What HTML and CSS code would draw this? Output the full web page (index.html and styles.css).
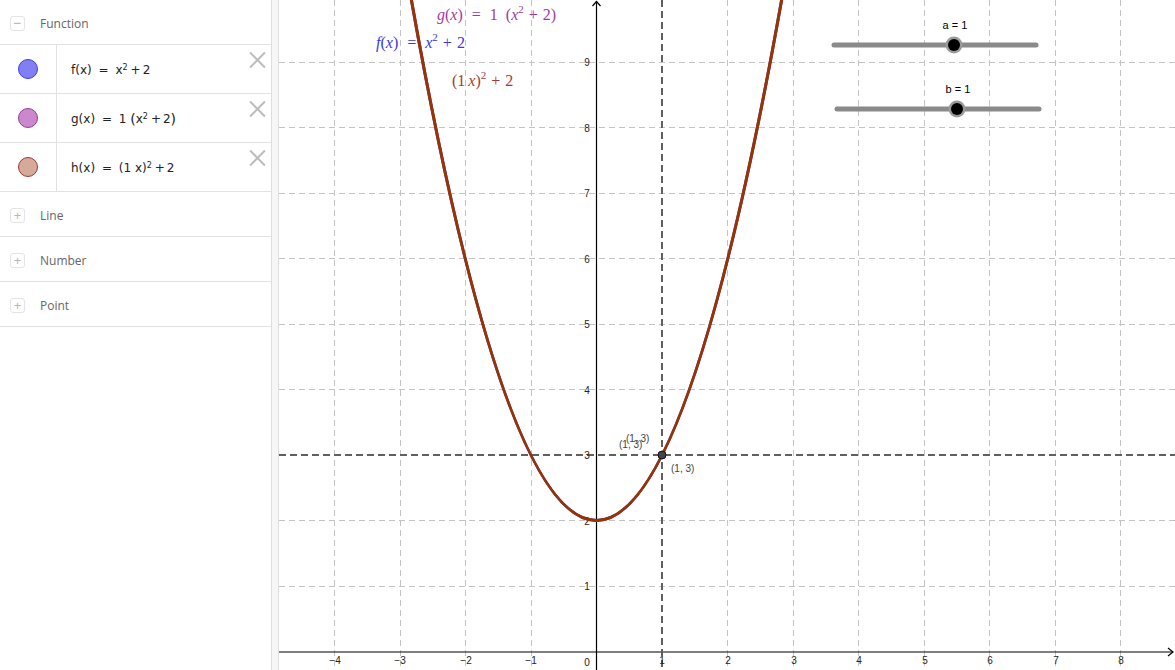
FILE: index.html
```html
<!DOCTYPE html>
<html>
<head>
<meta charset="utf-8">
<link rel="stylesheet" href="styles.css">
</head>
<body>
<div class="app">
  <aside class="algebra">
    <div class="group">
      <span class="toggle">&minus;</span>
      <span class="group-name">Function</span>
    </div>
    <div class="item">
      <div class="marker"><span class="dot dot-f"></span></div>
      <div class="formula">f(x) <span class="eq">=</span> x<sup>2</sup><span class="op">+</span>2</div>
      <span class="close"></span>
    </div>
    <div class="item">
      <div class="marker"><span class="dot dot-g"></span></div>
      <div class="formula">g(x) <span class="eq">=</span> 1 <span class="paren">(</span>x<sup>2</sup><span class="op">+</span>2<span class="paren">)</span></div>
      <span class="close"></span>
    </div>
    <div class="item">
      <div class="marker"><span class="dot dot-h"></span></div>
      <div class="formula">h(x) <span class="eq">=</span> (1 x)<sup>2</sup><span class="op">+</span>2</div>
      <span class="close"></span>
    </div>
    <div class="group">
      <span class="toggle plus">+</span>
      <span class="group-name">Line</span>
    </div>
    <div class="group">
      <span class="toggle plus">+</span>
      <span class="group-name">Number</span>
    </div>
    <div class="group">
      <span class="toggle plus">+</span>
      <span class="group-name">Point</span>
    </div>
  </aside>
  <div class="splitter"></div>
  <main class="graphics">
    <svg class="plot" viewBox="279 0 896 670" width="896" height="670" xmlns="http://www.w3.org/2000/svg">
      <g class="grid" stroke="#c4c4c4" stroke-width="1" stroke-dasharray="6 4" fill="none">
        <line x1="334.5" y1="0" x2="334.5" y2="670"/>
        <line x1="400.5" y1="0" x2="400.5" y2="670"/>
        <line x1="465.5" y1="0" x2="465.5" y2="670"/>
        <line x1="531.5" y1="0" x2="531.5" y2="670"/>
        <line x1="727.5" y1="0" x2="727.5" y2="670"/>
        <line x1="793.5" y1="0" x2="793.5" y2="670"/>
        <line x1="858.5" y1="0" x2="858.5" y2="670"/>
        <line x1="924.5" y1="0" x2="924.5" y2="670"/>
        <line x1="989.5" y1="0" x2="989.5" y2="670"/>
        <line x1="1055.5" y1="0" x2="1055.5" y2="670"/>
        <line x1="1120.5" y1="0" x2="1120.5" y2="670"/>
        <line x1="279" y1="62.5" x2="1175" y2="62.5"/>
        <line x1="279" y1="127.5" x2="1175" y2="127.5"/>
        <line x1="279" y1="193.5" x2="1175" y2="193.5"/>
        <line x1="279" y1="258.5" x2="1175" y2="258.5"/>
        <line x1="279" y1="324.5" x2="1175" y2="324.5"/>
        <line x1="279" y1="389.5" x2="1175" y2="389.5"/>
        <line x1="279" y1="520.5" x2="1175" y2="520.5"/>
        <line x1="279" y1="586.5" x2="1175" y2="586.5"/>
      </g>
      <!-- axes -->
      <g stroke="#000" stroke-width="1.2" fill="none">
        <line x1="596.5" y1="1" x2="596.5" y2="670"/>
        <polyline points="592.5,6 596.5,1.5 600.5,6"/>
        <line x1="279" y1="652" x2="1173" y2="652"/>
        <polyline points="1168,648 1173,652 1168,656"/>
      </g>
      <!-- dashed lines x=1, y=3 -->
      <g stroke="#606060" stroke-width="2" stroke-dasharray="7 4" fill="none">
        <line x1="662" y1="0" x2="662" y2="670"/>
        <line x1="279" y1="455" x2="1175" y2="455"/>
      </g>
      <!-- axis labels -->
      <g class="ticks" font-family="Liberation Sans, Arial, sans-serif" font-size="10" fill="#222">
        <text x="335" y="664" text-anchor="middle">−4</text>
        <text x="400" y="664" text-anchor="middle">−3</text>
        <text x="466" y="664" text-anchor="middle">−2</text>
        <text x="531" y="664" text-anchor="middle">−1</text>
        <text x="587" y="666" text-anchor="middle">0</text>
        <text x="662" y="664" text-anchor="middle">1</text>
        <text x="728" y="664" text-anchor="middle">2</text>
        <text x="794" y="664" text-anchor="middle">3</text>
        <text x="859" y="664" text-anchor="middle">4</text>
        <text x="925" y="664" text-anchor="middle">5</text>
        <text x="990" y="664" text-anchor="middle">6</text>
        <text x="1056" y="664" text-anchor="middle">7</text>
        <text x="1121" y="664" text-anchor="middle">8</text>
        <text x="587" y="590" text-anchor="middle">1</text>
        <text x="587" y="524.5" text-anchor="middle">2</text>
        <text x="587" y="459" text-anchor="middle">3</text>
        <text x="587" y="393.5" text-anchor="middle">4</text>
        <text x="587" y="328" text-anchor="middle">5</text>
        <text x="587" y="262.5" text-anchor="middle">6</text>
        <text x="587" y="197" text-anchor="middle">7</text>
        <text x="587" y="131.5" text-anchor="middle">8</text>
        <text x="587" y="66" text-anchor="middle">9</text>
      </g>
      <!-- curves -->
      <path d="M 399.5 -69 Q 596.5 1110 793.5 -69" stroke="#3a3ad8" stroke-width="3" fill="none"/>
      <path d="M 399.5 -69 Q 596.5 1110 793.5 -69" stroke="#993300" stroke-width="3" fill="none"/>
      <!-- point -->
      <circle cx="662" cy="455" r="4" fill="#444" stroke="#111" stroke-width="1"/>
      <g font-family="Liberation Sans, Arial, sans-serif" font-size="10" fill="#444">
        <text x="671" y="472">(1, 3)</text>
        <text x="619" y="448">(1, 3)</text>
        <text x="626" y="442">(1, 3)</text>
      </g>
      <!-- function labels -->
      <g font-family="Liberation Serif, DejaVu Serif, serif" font-size="16">
        <text x="437" y="20" fill="#a03aa0"><tspan font-style="italic">g</tspan>(<tspan font-style="italic">x</tspan>)<tspan dx="9">=</tspan><tspan dx="9">1</tspan><tspan dx="8">(</tspan><tspan font-style="italic">x</tspan><tspan font-size="11" dy="-7">2</tspan><tspan dy="7" dx="5">+</tspan><tspan dx="5">2)</tspan></text>
        <text x="376" y="48" fill="#3a3ae0"><tspan font-style="italic">f</tspan>(<tspan font-style="italic">x</tspan>)<tspan dx="9">=</tspan><tspan dx="9" font-style="italic">x</tspan><tspan font-size="11" dy="-7">2</tspan><tspan dy="7" dx="5">+</tspan><tspan dx="5">2</tspan></text>
        <text x="452" y="86" fill="#a33a3a">(1<tspan dx="3" font-style="italic">x</tspan>)<tspan font-size="11" dy="-7">2</tspan><tspan dy="7" dx="5">+</tspan><tspan dx="5">2</tspan></text>
      </g>
      <!-- sliders -->
      <g font-family="Liberation Sans, Arial, sans-serif" font-size="11" fill="#000" text-anchor="middle">
        <text x="955" y="29">a = 1</text>
        <text x="958" y="93">b = 1</text>
      </g>
      <g stroke="#8a8a8a" stroke-width="5" stroke-linecap="round">
        <line x1="834" y1="45" x2="1036" y2="45"/>
        <line x1="837" y1="109" x2="1039" y2="109"/>
      </g>
      <circle cx="954" cy="45" r="8.5" fill="#9a9a9a"/>
      <circle cx="954" cy="45" r="6" fill="#000"/>
      <circle cx="957" cy="109" r="8.5" fill="#9a9a9a"/>
      <circle cx="957" cy="109" r="6" fill="#000"/>
    </svg>
  </main>
</div>
</body>
</html>
```
FILE: styles.css
```css
* { box-sizing: border-box; }
html, body { margin: 0; padding: 0; background: #fff; }
body { width: 1175px; height: 670px; overflow: hidden; font-family: "Open Sans", "Noto Sans", sans-serif; }
.app { display: flex; height: 670px; }
.algebra { width: 271px; flex: none; background: #fff; }
.group {
  height: 45px;
  border-bottom: 1px solid #e2e2e2;
  display: flex;
  align-items: center;
  padding-left: 10px;
  padding-top: 2px;
}
.toggle {
  width: 15px; height: 15px;
  border: 1px solid #e4e4e4;
  border-radius: 3px;
  display: flex; align-items: center; justify-content: center;
  color: #aaa; font-size: 14px; line-height: 1;
}
.toggle.plus { font-size: 13px; color: #b5b5b5; }
.group-name { margin-left: 15px; font-size: 12px; color: #666; }
.item {
  height: 49px;
  border-bottom: 1px solid #e2e2e2;
  display: flex;
  position: relative;
}
.marker {
  width: 57px; flex: none;
  border-right: 1px solid #e2e2e2;
  display: flex; align-items: center; justify-content: center;
  padding-right: 1px;
}
.dot { width: 20px; height: 20px; border-radius: 50%; display: block; }
.dot-f { background: #8080f2; border: 1.5px solid #3c3cf0; }
.dot-g { background: #cc88cc; border: 1.5px solid #9a3a9a; }
.dot-h { background: #d6aa98; border: 1.5px solid #9a3a3a; }
.formula {
  padding-left: 14px;
  display: flex; align-items: center;
  font-family: "DejaVu Sans", "Liberation Sans", sans-serif;
  font-size: 12px; color: #222;
  white-space: pre;
  padding-top: 1px;
}
.formula sup { font-size: 8px; position: relative; top: -2px; }
.formula .eq { margin: 0 3px; }
.formula .op { margin: 0 2px 0 3px; }
.formula .paren { font-size: 14px; }
.close {
  position: absolute; right: 5px; top: 6px;
  width: 17px; height: 17px;
}
.close::before, .close::after {
  content: ""; position: absolute; left: -2px; top: 7.5px;
  width: 21px; height: 2px; background: #bdbdbd;
}
.close::before { transform: rotate(45deg); }
.close::after { transform: rotate(-45deg); }
.splitter {
  width: 8px; flex: none;
  background: #f6f6f6;
  border-left: 1px solid #dedede;
  border-right: 1px solid #dedede;
}
.graphics { flex: 1; position: relative; overflow: hidden; }
.plot { display: block; }
```
